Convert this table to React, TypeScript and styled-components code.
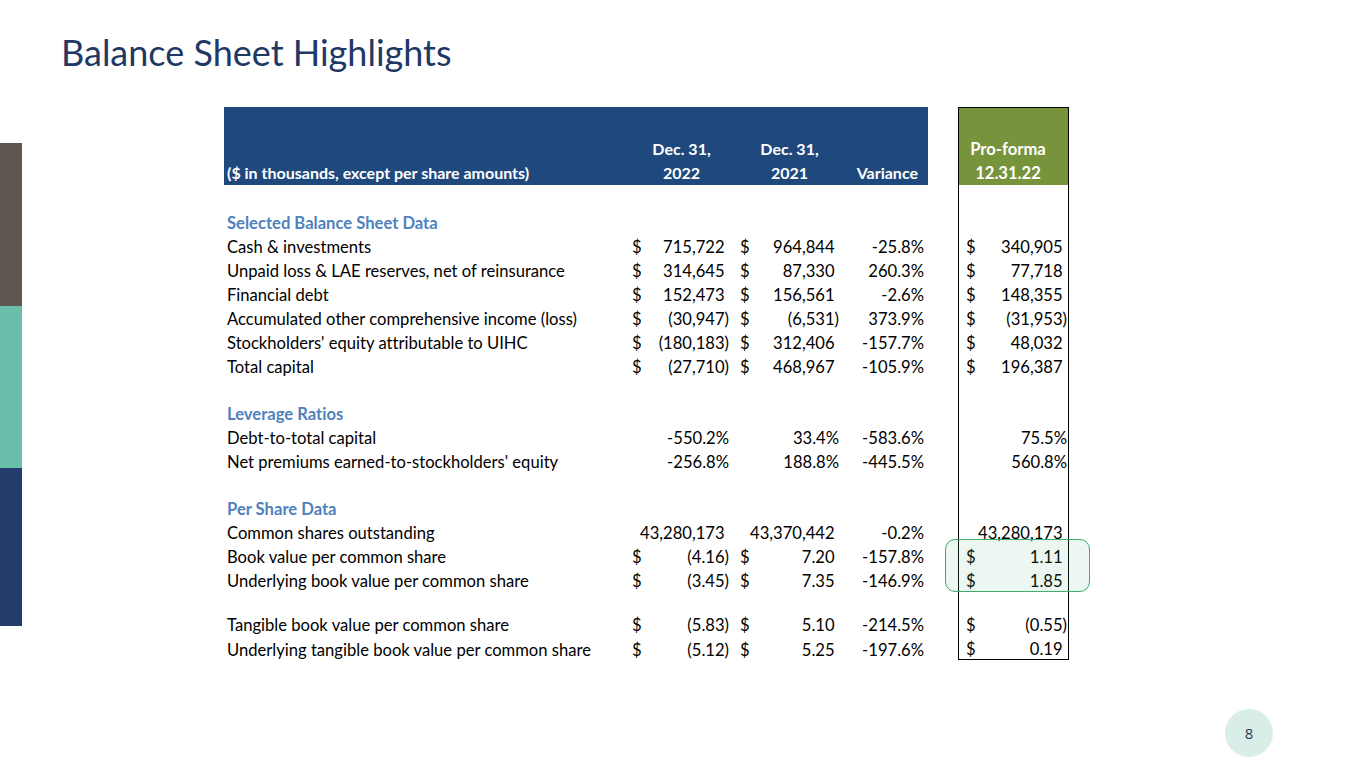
import React from "react";
import styled, { createGlobalStyle } from "styled-components";

const GlobalStyle = createGlobalStyle`
  html, body { margin: 0; padding: 0; background: #ffffff; }
  body {
    font-family: Lato, "Open Sans", "Liberation Sans", sans-serif;
    color: #000;
    font-variant-ligatures: none;
    font-feature-settings: "liga" 0, "clig" 0;
  }
  * { box-sizing: border-box; }
`;

const Slide = styled.div`
  position: relative;
  width: 1365px;
  height: 768px;
  overflow: hidden;
  background: #fff;
`;

const TitleBar = styled.header`
  height: 100px;
  padding: 30px 0 0 61px;
`;

const Title = styled.h1`
  margin: 0;
  font-family: Lato, "Open Sans", sans-serif;
  font-weight: 400;
  font-size: 36px;
  line-height: 45px;
  color: #1f3864;
`;

const Main = styled.main`
  display: flex;
  align-items: flex-start;
`;

const SideBar = styled.div`
  margin-top: 43px;
  width: 22px;
  display: flex;
  flex-direction: column;
`;

const SideSegment = styled.div<{ $c: string; $h: number }>`
  background: ${(p) => p.$c};
  height: ${(p) => p.$h}px;
`;

const TableWrap = styled.section`
  margin-left: 202px;
  margin-top: 7px;
  font-size: 16.6px;
`;

const COLS = "402px 108px 108px 86px 30px 111px";

const Row = styled.div<{ $h?: number }>`
  display: grid;
  grid-template-columns: ${COLS};
  height: ${(p) => p.$h ?? 24}px;
  align-items: stretch;
`;

const HeadCell = styled.div<{ $align?: string; $pr?: number }>`
  background: #1f497d;
  color: #fff;
  font-weight: 700;
  font-size: 16px;
  display: flex;
  flex-direction: column;
  justify-content: flex-end;
  align-items: ${(p) => p.$align ?? "center"};
  padding: 0 ${(p) => p.$pr ?? 0}px 0 3px;
  line-height: 24px;
  white-space: nowrap;
`;

const HeadPro = styled.div`
  background: #77933c;
  color: #fff;
  font-weight: 700;
  font-size: 16.6px;
  border: 1.5px solid #000;
  border-bottom: none;
  display: flex;
  flex-direction: column;
  justify-content: flex-end;
  align-items: center;
  padding-right: 11px;
  line-height: 24px;
`;

const Spacer = styled.div``;

const Label = styled.div<{ $section?: boolean }>`
  display: flex;
  align-items: center;
  padding: 4px 0 0 3px;
  white-space: nowrap;
  font-weight: ${(p) => (p.$section ? 700 : 400)};
  color: ${(p) => (p.$section ? "#4f81bd" : "#000")};
`;

const NumCell = styled.div<{ $pl: number; $pr: number }>`
  display: flex;
  align-items: center;
  justify-content: space-between;
  padding: 4px ${(p) => p.$pr}px 0 ${(p) => p.$pl}px;
  white-space: nowrap;
  color: #000;
`;

const ProCell = styled(NumCell)<{ $last?: boolean }>`
  border-left: 1.5px solid #000;
  border-right: 1.5px solid #000;
  border-bottom: ${(p) => (p.$last ? "1.5px solid #000" : "none")};
`;

const Value = styled.span`
  margin-left: auto;
`;

const Pad = styled.span`
  visibility: hidden;
`;

const HighlightGroup = styled.div`
  position: relative;
`;

const Highlight = styled.div`
  position: absolute;
  left: 721px;
  width: 145px;
  top: -4px;
  bottom: -1px;
  border: 1.5px solid #3fac6b;
  border-radius: 10px;
  background: rgba(63, 172, 107, 0.1);
  pointer-events: none;
`;

const PageBadge = styled.div`
  position: absolute;
  right: 92px;
  bottom: 11px;
  width: 48px;
  height: 48px;
  border-radius: 50%;
  background: #daeee9;
  color: #2a3a52;
  font-family: "Open Sans", sans-serif;
  font-size: 15px;
  display: flex;
  align-items: center;
  justify-content: center;
`;

type DataRow = {
  label: string;
  a: string;
  b: string;
  v: string;
  p: string;
  dollar?: boolean;
};

type Item =
  | { kind: "blank"; h?: number }
  | { kind: "section"; label: string }
  | { kind: "data"; row: DataRow; last?: boolean }
  | { kind: "highlight"; rows: DataRow[] };

const items: Item[] = [
  { kind: "blank" },
  { kind: "section", label: "Selected Balance Sheet Data" },
  { kind: "data", row: { label: "Cash & investments", a: "715,722", b: "964,844", v: "-25.8%", p: "340,905", dollar: true } },
  { kind: "data", row: { label: "Unpaid loss & LAE reserves, net of reinsurance", a: "314,645", b: "87,330", v: "260.3%", p: "77,718", dollar: true } },
  { kind: "data", row: { label: "Financial debt", a: "152,473", b: "156,561", v: "-2.6%", p: "148,355", dollar: true } },
  { kind: "data", row: { label: "Accumulated other comprehensive income (loss)", a: "(30,947)", b: "(6,531)", v: "373.9%", p: "(31,953)", dollar: true } },
  { kind: "data", row: { label: "Stockholders' equity attributable to UIHC", a: "(180,183)", b: "312,406", v: "-157.7%", p: "48,032", dollar: true } },
  { kind: "data", row: { label: "Total capital", a: "(27,710)", b: "468,967", v: "-105.9%", p: "196,387", dollar: true } },
  { kind: "blank", h: 23 },
  { kind: "section", label: "Leverage Ratios" },
  { kind: "data", row: { label: "Debt-to-total capital", a: "-550.2%", b: "33.4%", v: "-583.6%", p: "75.5%" } },
  { kind: "data", row: { label: "Net premiums earned-to-stockholders' equity", a: "-256.8%", b: "188.8%", v: "-445.5%", p: "560.8%" } },
  { kind: "blank", h: 23 },
  { kind: "section", label: "Per Share Data" },
  { kind: "data", row: { label: "Common shares outstanding", a: "43,280,173", b: "43,370,442", v: "-0.2%", p: "43,280,173" } },
  {
    kind: "highlight",
    rows: [
      { label: "Book value per common share", a: "(4.16)", b: "7.20", v: "-157.8%", p: "1.11", dollar: true },
      { label: "Underlying book value per common share", a: "(3.45)", b: "7.35", v: "-146.9%", p: "1.85", dollar: true },
    ],
  },
  { kind: "blank", h: 20 },
  { kind: "data", row: { label: "Tangible book value per common share", a: "(5.83)", b: "5.10", v: "-214.5%", p: "(0.55)", dollar: true } },
  { kind: "data", row: { label: "Underlying tangible book value per common share", a: "(5.12)", b: "5.25", v: "-197.6%", p: "0.19", dollar: true }, last: true },
];

const Amount: React.FC<{ text: string; dollar?: boolean }> = ({ text, dollar }) => {
  const isPct = text.endsWith("%");
  const neg = text.startsWith("(");
  return (
    <>
      {dollar ? <span>$</span> : null}
      <Value>
        {text}
        {!isPct && !neg ? <Pad>)</Pad> : null}
      </Value>
    </>
  );
};

const DataLine: React.FC<{ row: DataRow; last?: boolean }> = ({ row, last }) => (
  <Row>
    <Label>{row.label}</Label>
    <NumCell $pl={6} $pr={5}>
      <Amount text={row.a} dollar={row.dollar} />
    </NumCell>
    <NumCell $pl={6} $pr={3}>
      <Amount text={row.b} dollar={row.dollar} />
    </NumCell>
    <NumCell $pl={0} $pr={4}>
      <Value>{row.v}</Value>
    </NumCell>
    <Spacer />
    <ProCell $pl={7} $pr={1} $last={last}>
      <Amount text={row.p} dollar={row.dollar} />
    </ProCell>
  </Row>
);

const EmptyLine: React.FC<{ h?: number; section?: string }> = ({ h, section }) => (
  <Row $h={h}>
    <Label $section>{section ?? ""}</Label>
    <Spacer />
    <Spacer />
    <Spacer />
    <Spacer />
    <ProCell $pl={0} $pr={0} />
  </Row>
);

export default function App() {
  return (
    <>
      <GlobalStyle />
      <Slide>
        <TitleBar>
          <Title>Balance Sheet Highlights</Title>
        </TitleBar>
        <Main>
          <SideBar>
            <SideSegment $c="#5e5650" $h={163} />
            <SideSegment $c="#69bfaa" $h={162} />
            <SideSegment $c="#233c6b" $h={158} />
          </SideBar>
          <TableWrap>
            <Row $h={78}>
              <HeadCell $align="flex-start">($ in thousands, except per share amounts)</HeadCell>
              <HeadCell>
                <span>Dec. 31,</span>
                <span>2022</span>
              </HeadCell>
              <HeadCell>
                <span>Dec. 31,</span>
                <span>2021</span>
              </HeadCell>
              <HeadCell $align="flex-end" $pr={10}>
                Variance
              </HeadCell>
              <Spacer />
              <HeadPro>
                <span>Pro-forma</span>
                <span>12.31.22</span>
              </HeadPro>
            </Row>
            {items.map((it, i) => {
              if (it.kind === "blank") return <EmptyLine key={i} h={it.h} />;
              if (it.kind === "section") return <EmptyLine key={i} section={it.label} />;
              if (it.kind === "highlight")
                return (
                  <HighlightGroup key={i}>
                    {it.rows.map((r, j) => (
                      <DataLine key={j} row={r} />
                    ))}
                    <Highlight />
                  </HighlightGroup>
                );
              return <DataLine key={i} row={it.row} last={it.last} />;
            })}
          </TableWrap>
        </Main>
        <PageBadge>8</PageBadge>
      </Slide>
    </>
  );
}
